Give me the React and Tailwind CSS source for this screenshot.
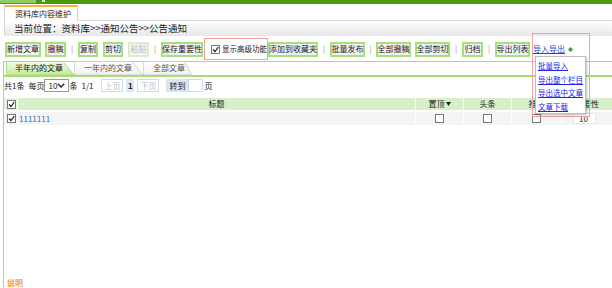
import React from 'react'

function Btn({ w, disabled, children }) {
  return (
    <div
      className={`${w} h-[15px] shrink-0 flex items-center justify-center border-2 bg-[#f3f3f3] whitespace-nowrap ${
        disabled ? 'border-[#d8f0c4] text-[#bdbdbd]' : 'border-[#a6e07a] text-[#222]'
      }`}
    >
      {children}
    </div>
  )
}

function Sep({ w }) {
  return <span className={`${w} shrink-0 text-center text-[#999]`}>|</span>
}

function Check({ checked }) {
  return (
    <span className="w-[9px] h-[9px] shrink-0 border border-[#777] bg-white flex items-center justify-center">
      {checked && (
        <svg width="7" height="7" viewBox="0 0 7 7">
          <path d="M1 3.5 L3 5.5 L6.2 1.2" fill="none" stroke="#222" strokeWidth="1.2" />
        </svg>
      )}
    </span>
  )
}

function Tab({ w, active, children }) {
  return (
    <div className={`${w} relative h-[14px] shrink-0 flex items-center`}>
      <svg className="absolute inset-0" width="100%" height="100%" viewBox="0 0 100 14" preserveAspectRatio="none">
        <defs>
          <linearGradient id="tabOn" x1="0" y1="0" x2="0" y2="1">
            <stop offset="0" stopColor="#f0fbe4" />
            <stop offset="1" stopColor="#c6ea9e" />
          </linearGradient>
          <linearGradient id="tabOff" x1="0" y1="0" x2="0" y2="1">
            <stop offset="0" stopColor="#ffffff" />
            <stop offset="1" stopColor="#f1f1f1" />
          </linearGradient>
        </defs>
        <polygon
          points="0.5,14 0.5,0.5 84,0.5 99.5,14"
          fill={active ? 'url(#tabOn)' : 'url(#tabOff)'}
          stroke={active ? '#a6dc78' : '#cfcfcf'}
          strokeWidth="1"
          vectorEffect="non-scaling-stroke"
        />
      </svg>
      <span className={`relative ${active ? 'pl-[9px] text-[#111]' : 'pl-[10px] text-[#555]'}`}>{children}</span>
    </div>
  )
}

function PageBtn({ children, className }) {
  return (
    <div className={`h-[13px] flex items-center justify-center border border-[#c9dcf0] ${className}`}>
      {children}
    </div>
  )
}

export default function App() {
  return (
    <div className="relative w-[612px] h-[288px] overflow-hidden bg-white flex flex-col text-[8px] leading-none text-[#222] font-['Noto_Sans_CJK_SC','Noto_Sans',sans-serif]">
      {/* top bar */}
      <div className="h-[4px] shrink-0 bg-[#4b9a0c] flex">
        <div className="w-[36px] h-[3px] bg-[#8fcc62]" />
        <div className="w-[3px] h-[2px] ml-[6px] bg-[#d8eec8]" />
      </div>

      {/* title tab + breadcrumb */}
      <div className="ml-[4px] h-[32px] shrink-0 flex flex-col border-l border-[#d2d2d2]">
        <div className="h-[17px] shrink-0 flex items-end">
          <div className="w-[73px] h-[16px] border-t-2 border-r border-t-[#f4b43a] border-r-[#d2d2d2] bg-white flex items-center pl-[10px]">
            资料库内容维护
          </div>
          <div className="flex-1 border-b border-[#dcdcdc]" />
        </div>
        <div className="flex-1 bg-gradient-to-b from-white to-[#e7e7e7] flex items-center pl-[9px] text-[9.5px] text-[#222]">
          当前位置：资料库&gt;&gt;通知公告&gt;&gt;公告通知
        </div>
      </div>

      {/* toolbar */}
      <div className="h-[25px] shrink-0 flex items-center pl-[5px] pt-[1px]">
        <Btn w="w-[36px]">新增文章</Btn>
        <div className="w-[4px] shrink-0" />
        <Btn w="w-[21px]">撤稿</Btn>
        <Sep w="w-[12px]" />
        <Btn w="w-[20px]">复制</Btn>
        <div className="w-[5px] shrink-0" />
        <Btn w="w-[20px]">剪切</Btn>
        <div className="w-[5px] shrink-0" />
        <Btn w="w-[21px]" disabled>粘贴</Btn>
        <Sep w="w-[12px]" />
        <Btn w="w-[42px]">保存重要性</Btn>
        <div className="w-[64px] h-[22px] ml-[1px] shrink-0 border border-[#f2a0a0] flex items-center pl-[6px] gap-[2px] text-[7.5px]">
          <Check checked />
          <span className="whitespace-nowrap">显示高级功能</span>
        </div>
        <Btn w="w-[50px]">添加到收藏夹</Btn>
        <Sep w="w-[12px]" />
        <Btn w="w-[35px]">批量发布</Btn>
        <Sep w="w-[11px]" />
        <Btn w="w-[35px]">全部撤稿</Btn>
        <div className="w-[4px] shrink-0" />
        <Btn w="w-[35px]">全部剪切</Btn>
        <Sep w="w-[12px]" />
        <Btn w="w-[21px]">归档</Btn>
        <Sep w="w-[12px]" />
        <Btn w="w-[35px]">导出列表</Btn>
        <span className="ml-[3px] shrink-0 text-[#1f3fd8] underline whitespace-nowrap">导入导出</span>
        <svg className="ml-[3px] shrink-0" width="5" height="5" viewBox="0 0 5 5">
          <path d="M2.5 0 L5 2.5 L2.5 5 L0 2.5 Z" fill="#3aa51a" />
        </svg>
      </div>

      {/* main panel */}
      <div className="ml-[3px] flex-1 flex flex-col border-l border-t border-[#a8dc78]">
        <div className="h-[15px] shrink-0 flex items-end pl-[2px] pt-[1px] border-b-2 border-[#a8dc78]">
          <Tab w="w-[68px]" active>半年内的文章</Tab>
          <Tab w="w-[69px]">一年内的文章</Tab>
          <Tab w="w-[49px]">全部文章</Tab>
        </div>

        {/* pager */}
        <div className="h-[15px] mt-[1px] shrink-0 flex items-center whitespace-nowrap">
          <span>共1条</span>
          <span className="ml-[4px]">每页</span>
          <div className="w-[25px] h-[13px] border border-[#9a9a9a] flex items-center justify-between px-[3px]">
            <span>10</span>
            <svg width="8" height="5" viewBox="0 0 8 5">
              <path d="M0.8 0.8 L4 4 L7.2 0.8" fill="none" stroke="#222" strokeWidth="1.3" />
            </svg>
          </div>
          <span>条</span>
          <span className="ml-[4px]">1/1</span>
          <PageBtn className="ml-[8px] w-[22px] text-[#b4c0cc]">上页</PageBtn>
          <div className="ml-[3px] w-[8px] h-[13px] bg-[#dce8f5] flex items-center justify-center font-bold">1</div>
          <PageBtn className="ml-[3px] w-[22px] text-[#b4c0cc]">下页</PageBtn>
          <div className="ml-[7px] w-[22px] h-[13px] bg-[#d7e5f5] flex items-center justify-center">转到</div>
          <div className="w-[15px] h-[13px] border border-[#c9dcf0] bg-white" />
          <span className="ml-[1px]">页</span>
        </div>

        {/* table */}
        <div className="mt-[5px] shrink-0 flex flex-col">
          <div className="h-[12px] flex">
            <div className="w-[13px] bg-[#e6f3dc] flex items-center pl-[3px]">
              <Check checked />
            </div>
            <div className="w-[1px] bg-white" />
            <div className="w-[397px] bg-[#d8efc9] flex items-center justify-center">标题</div>
            <div className="w-[1px] bg-white" />
            <div className="w-[47px] bg-[#d8efc9] flex items-center justify-center gap-[1px]">
              置顶
              <svg width="5" height="4" viewBox="0 0 5 4">
                <path d="M0 0 L5 0 L2.5 4 Z" fill="#222" />
              </svg>
            </div>
            <div className="w-[1px] bg-white" />
            <div className="w-[47px] bg-[#d8efc9] flex items-center justify-center">头条</div>
            <div className="w-[1px] bg-white" />
            <div className="w-[49px] bg-[#d8efc9] flex items-center justify-center">推荐</div>
            <div className="w-[1px] bg-white" />
            <div className="flex-1 bg-[#d8efc9] flex items-center justify-center">重要性</div>
          </div>
          <div className="h-[13px] mt-[2px] flex">
            <div className="w-[13px] bg-[#f4f4f4] flex items-center pl-[3px]">
              <Check checked />
            </div>
            <div className="w-[1px] bg-white" />
            <div className="w-[397px] bg-[#f4f4f4] flex items-center pl-[1px] text-[#2f6fc4]">1111111</div>
            <div className="w-[1px] bg-white" />
            <div className="w-[47px] bg-[#f4f4f4] flex items-center justify-center">
              <Check />
            </div>
            <div className="w-[1px] bg-white" />
            <div className="w-[47px] bg-[#f4f4f4] flex items-center justify-center">
              <Check />
            </div>
            <div className="w-[1px] bg-white" />
            <div className="w-[49px] bg-[#f4f4f4] flex items-center justify-center">
              <Check />
            </div>
            <div className="w-[1px] bg-white" />
            <div className="flex-1 bg-[#f4f4f4] flex items-center pl-[11px]">
              <div className="w-[23px] h-[11px] bg-white border border-[#dff2d2] flex items-center pl-[5px]">10</div>
            </div>
          </div>
        </div>

        <div className="mt-auto mb-[1px] ml-[3px] text-[#f59a3c] font-bold">说明</div>
      </div>

      {/* import/export dropdown */}
      <div className="absolute left-[532px] top-[33px] w-[58px] h-[84px] border border-[#f2a0a0]" />
      <div className="absolute left-[535px] top-[56px] w-[51px] h-[58px] bg-white border border-[#bdbdbd] shadow-[1px_1px_2px_rgba(0,0,0,0.25)] flex flex-col pl-[2px] pt-[2px] text-[7.5px] text-[#2222ee] underline whitespace-nowrap">
        <div className="h-[14px] flex items-center">批量导入</div>
        <div className="h-[14px] flex items-center">导出整个栏目</div>
        <div className="h-[14px] flex items-center">导出选中文章</div>
        <div className="h-[14px] flex items-center">文章下载</div>
      </div>
    </div>
  )
}
